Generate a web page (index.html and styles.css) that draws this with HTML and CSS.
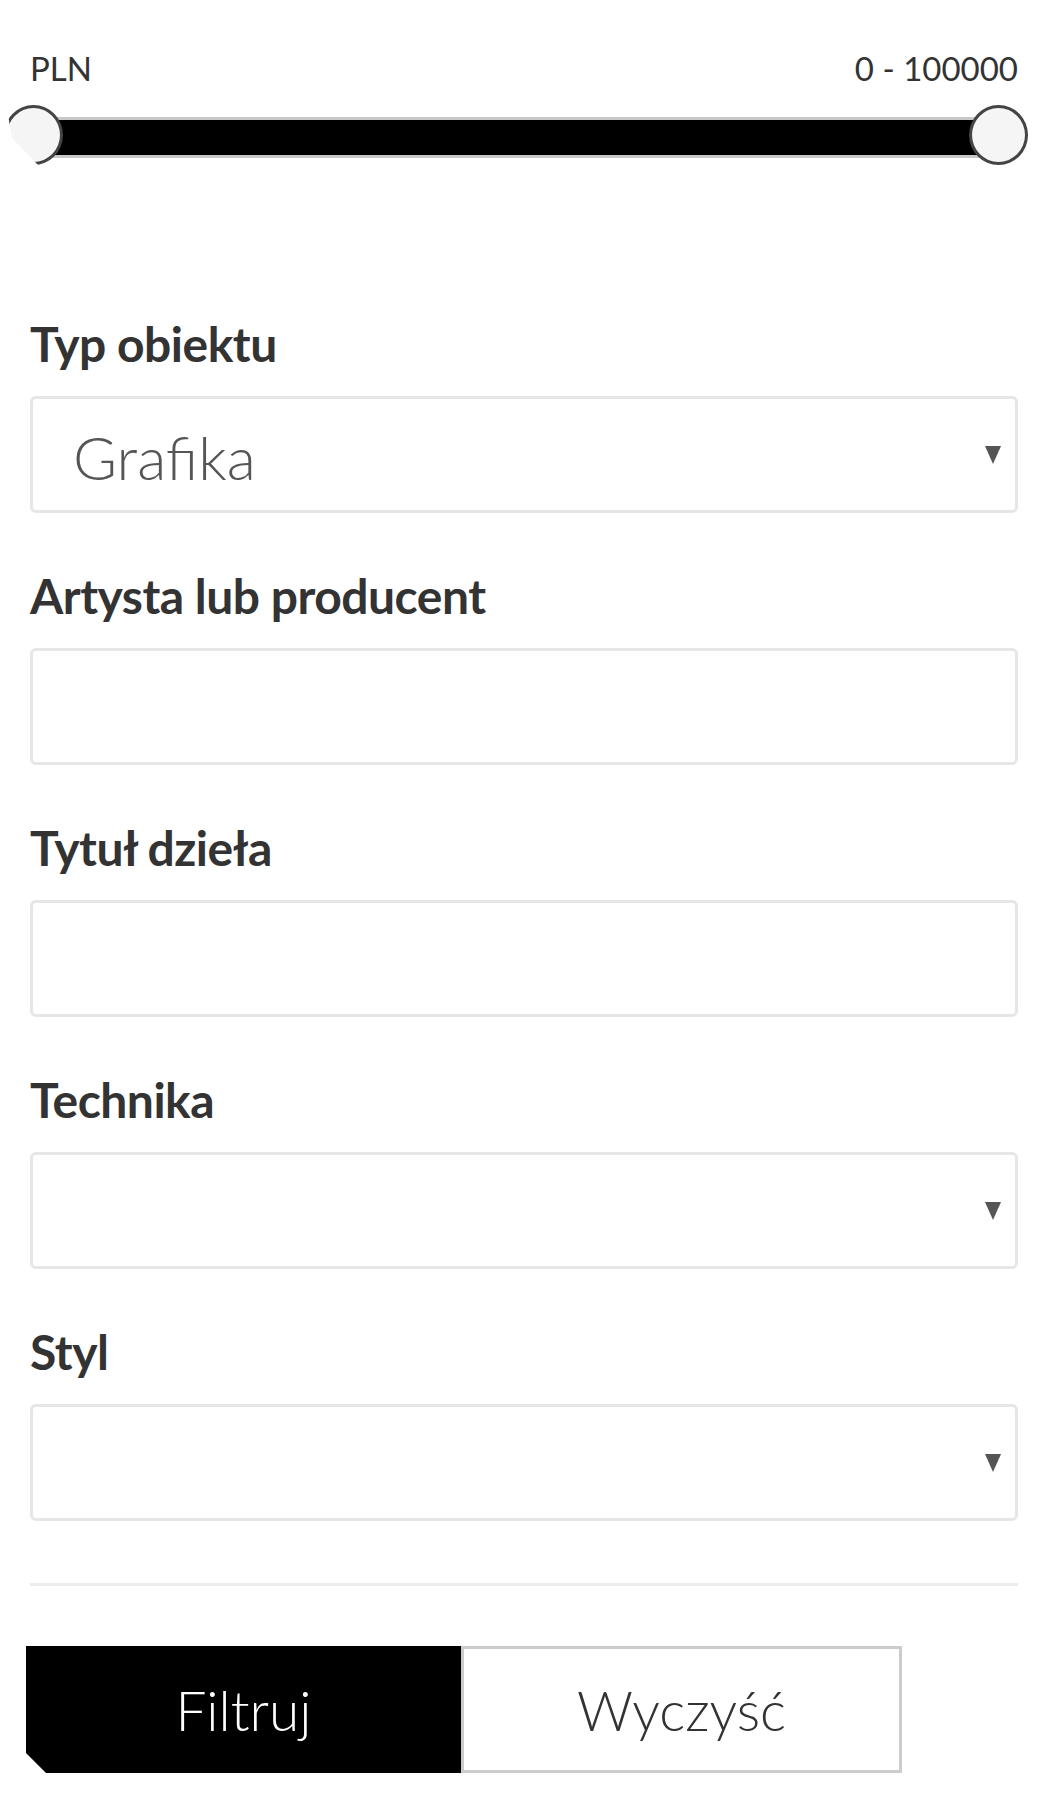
FILE: index.html
```html
<!DOCTYPE html>
<html lang="pl">
<head>
<meta charset="utf-8">
<title>Filtry</title>
<link rel="stylesheet" href="styles.css">
</head>
<body>
<div class="page">
  <div class="range-head">
    <span>PLN</span>
    <span>0 - 100000</span>
  </div>
  <div class="slider">
    <div class="track"></div>
    <div class="thumb thumb-left"></div>
    <div class="thumb thumb-right"></div>
  </div>

  <div class="fields">
    <div class="field">
      <div class="label">Typ obiektu</div>
      <div class="box select"><span class="value">Grafika</span><span class="arrow"></span></div>
    </div>
    <div class="field">
      <div class="label">Artysta lub producent</div>
      <div class="box"></div>
    </div>
    <div class="field">
      <div class="label">Tytuł dzieła</div>
      <div class="box"></div>
    </div>
    <div class="field">
      <div class="label">Technika</div>
      <div class="box select"><span class="value"></span><span class="arrow"></span></div>
    </div>
    <div class="field">
      <div class="label">Styl</div>
      <div class="box select"><span class="value"></span><span class="arrow"></span></div>
    </div>
  </div>

  <div class="sep"></div>

  <div class="buttons">
    <div class="btn btn-primary">Filtruj</div>
    <div class="btn btn-secondary">Wyczyść</div>
  </div>
</div>
</body>
</html>
```
FILE: styles.css
```css
html, body {
  margin: 0;
  padding: 0;
  background: #ffffff;
}
body {
  font-family: Lato, "Noto Sans", sans-serif;
  color: #333333;
}
.page {
  padding: 48px 27px 0 30px;
}
.range-head {
  display: flex;
  justify-content: space-between;
  font-size: 33px;
  line-height: 40px;
  font-weight: 400;
  color: #333;
}
.slider {
  position: relative;
  height: 60px;
  box-sizing: border-box;
  padding-top: 12px;
  margin: 17px -10px 0 -26px;
}
.track {
  margin: 0 29px;
  height: 35px;
  background: #000;
  border-top: 3px solid #c8c8c8;
  border-bottom: 3px solid #c8c8c8;
}
.thumb {
  position: absolute;
  top: 0;
  width: 59px;
  height: 60px;
  box-sizing: border-box;
  border: 3px solid #444;
  border-radius: 50%;
  background: #f5f5f5;
}
.thumb-left {
  left: 0;
  clip-path: polygon(4px 0, 100% 0, 100% 100%, 34px 100%, 8px 33px, 4px 10px);
}
.thumb-right {
  right: 0;
}
.fields {
  margin-top: 151px;
  display: flex;
  flex-direction: column;
  gap: 55px;
}
.label {
  font-size: 48px;
  line-height: 56px;
  font-weight: 700;
  letter-spacing: -0.5px;
  color: #333;
}
.box {
  margin-top: 24px;
  height: 117px;
  box-sizing: border-box;
  border: 3px solid #e6e6e6;
  border-radius: 6px;
  background: #fff;
}
.select {
  display: flex;
  align-items: center;
  justify-content: space-between;
  padding: 4px 14px 0 40px;
}
.value {
  font-size: 60px;
  font-weight: 300;
  color: #555;
}
.arrow {
  width: 0;
  height: 0;
  border-left: 8px solid transparent;
  border-right: 8px solid transparent;
  border-top: 18px solid #555;
  margin-bottom: 4px;
}
.sep {
  margin-top: 62px;
  height: 3px;
  background: #ececec;
}
.buttons {
  display: flex;
  margin: 60px 0 0 -4px;
}
.btn {
  height: 127px;
  box-sizing: border-box;
  display: flex;
  align-items: center;
  justify-content: center;
  font-size: 55px;
  font-weight: 300;
}
.btn-primary {
  width: 435px;
  background: #000;
  color: #fff;
  clip-path: polygon(0 0, 100% 0, 100% 100%, 20px 100%, 0 107px);
}
.btn-secondary {
  width: 441px;
  border: 3px solid #cccccc;
  color: #333;
}
```
